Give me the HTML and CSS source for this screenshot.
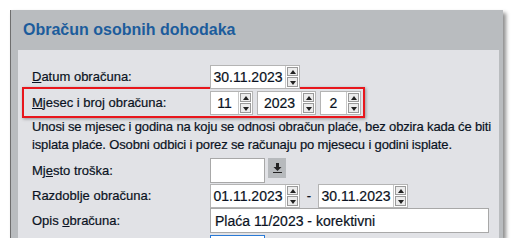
FILE: index.html
```html
<!DOCTYPE html>
<html lang="hr">
<head>
    <meta charset="UTF-8">
    <title>Obračun osobnih dohodaka</title>
    <link rel="stylesheet" href="styles.css">
</head>
<body>
    <div class="window">
        <div class="title-bar">
            <h1>Obračun osobnih dohodaka</h1>
        </div>
        <div class="panel">
            <div class="row">
                <label class="lbl"><u>D</u>atum obračuna:</label>
                <div class="spin w-date">
                    <span class="val">30.11.2023</span>
                    <span class="arrows"><i class="up"></i><i class="down"></i></span>
                </div>
            </div>

            <div class="highlight">
                <div class="row">
                    <label class="lbl"><u>M</u>jesec i broj obračuna:</label>
                    <div class="spin w-month">
                        <span class="val">11</span>
                        <span class="arrows"><i class="up"></i><i class="down"></i></span>
                    </div>
                    <div class="spin w-year">
                        <span class="val">2023</span>
                        <span class="arrows"><i class="up"></i><i class="down"></i></span>
                    </div>
                    <div class="spin w-num">
                        <span class="val">2</span>
                        <span class="arrows"><i class="up"></i><i class="down"></i></span>
                    </div>
                </div>
            </div>

            <p class="note">Unosi se mjesec i godina na koju se odnosi obračun plaće, bez obzira kada će biti isplata plaće. Osobni odbici i porez se računaju po mjesecu i godini isplate.</p>

            <div class="row">
                <label class="lbl">Mj<u>e</u>sto troška:</label>
                <div class="field w-cost"></div>
                <button class="pick">
                    <svg width="9" height="10" viewBox="0 0 9 10"><path d="M3 0h3v4h2.5L4.5 8 0.5 4H3z" fill="#222"/><rect x="0" y="9" width="9" height="1.5" fill="#222"/></svg>
                </button>
            </div>

            <div class="row">
                <label class="lbl">Razdoblje obračuna:</label>
                <div class="spin w-date">
                    <span class="val">01.11.2023</span>
                    <span class="arrows"><i class="up"></i><i class="down"></i></span>
                </div>
                <span class="dash">-</span>
                <div class="spin w-date">
                    <span class="val">30.11.2023</span>
                    <span class="arrows"><i class="up"></i><i class="down"></i></span>
                </div>
            </div>

            <div class="row">
                <label class="lbl">Opis <u>o</u>bračuna:</label>
                <div class="field w-desc">Plaća 11/2023 - korektivni</div>
            </div>

            <div class="row">
                <span class="lbl"></span>
                <div class="field focus"></div>
            </div>
        </div>
    </div>
</body>
</html>
```

FILE: styles.css
```css
html, body {
    margin: 0;
    padding: 0;
    background: #fff;
    overflow: hidden;
}
body {
    font-family: "Liberation Sans", Arial, sans-serif;
    font-size: 13px;
    color: #0a1222;
    -webkit-text-stroke: 0.2px #0a1222;
}
.window {
    margin: 10px 0 0 10px;
    width: 492px;
    height: 228px;
    background: #b9bcbf;
    border-left: 1px solid #6e6e6e;
    box-shadow: 3px 3px 4px rgba(0, 0, 0, 0.45);
    overflow: hidden;
}
.title-bar {
    height: 40px;
    display: flex;
    align-items: center;
    padding-left: 12px;
}
.title-bar h1 {
    margin: 0;
    font-size: 16px;
    font-weight: bold;
    color: #1c5c9c;
    -webkit-text-stroke: 0;
}
.panel {
    margin: 0 4px 0 7px;
    height: 188px;
    background: #e1e2e6;
    padding: 14px 0 0 14px;
    box-sizing: border-box;
}
.row {
    display: flex;
    align-items: center;
    height: 25px;
}
.lbl {
    width: 178px;
    flex-shrink: 0;
}
.highlight {
    margin: -2px 0 0 -10px;
    padding: 1px 2px 1px 8px;
    width: fit-content;
    border: 2px solid #e8161c;
    box-shadow: 1px 1px 3px rgba(0, 0, 0, 0.35);
}
.spin {
    display: flex;
    height: 24px;
    box-sizing: border-box;
    border: 1px solid #b4b4b4;
    background: #fff;
    margin-right: 4px;
}
.spin .val {
    flex: 1;
    display: flex;
    align-items: center;
    justify-content: center;
    border-right: 1px solid #c8c8c8;
    font-size: 14px;
}
.arrows {
    width: 11px;
    display: flex;
    flex-direction: column;
    gap: 1px;
    padding: 1px;
    background: #fff;
}
.arrows i {
    flex: 1;
    border: 1px solid #9a9a9a;
    background: #ececec;
    position: relative;
}
.arrows i::after {
    content: "";
    position: absolute;
    left: 2px;
    border-left: 3px solid transparent;
    border-right: 3px solid transparent;
}
.arrows .up::after {
    top: 2px;
    border-bottom: 4px solid #222;
}
.arrows .down::after {
    top: 3px;
    border-top: 4px solid #222;
}
.w-date { width: 90px; }
.w-month { width: 43px; }
.w-year { width: 59px; }
.w-num { width: 41px; margin-right: 0; }
.note {
    margin: 0 0 4px;
    line-height: 18px;
    width: 470px;
    letter-spacing: -0.15px;
}
.field {
    height: 25px;
    box-sizing: border-box;
    border: 1px solid #a8a8a8;
    background: #fff;
    padding-left: 4px;
    display: flex;
    align-items: center;
    font-size: 14px;
}
.w-cost { width: 55px; }
.w-desc { width: 279px; }
.pick {
    margin-left: 3px;
    width: 18px;
    height: 20px;
    border: none;
    background: #b7babd;
    padding: 0;
    display: flex;
    align-items: center;
    justify-content: center;
    align-self: flex-start;
}
.dash {
    width: 10px;
    text-align: center;
    margin-right: 4px;
}
.focus {
    width: 55px;
    border: 1px solid #2a7ad6;
    margin-top: 4px;
}
```
